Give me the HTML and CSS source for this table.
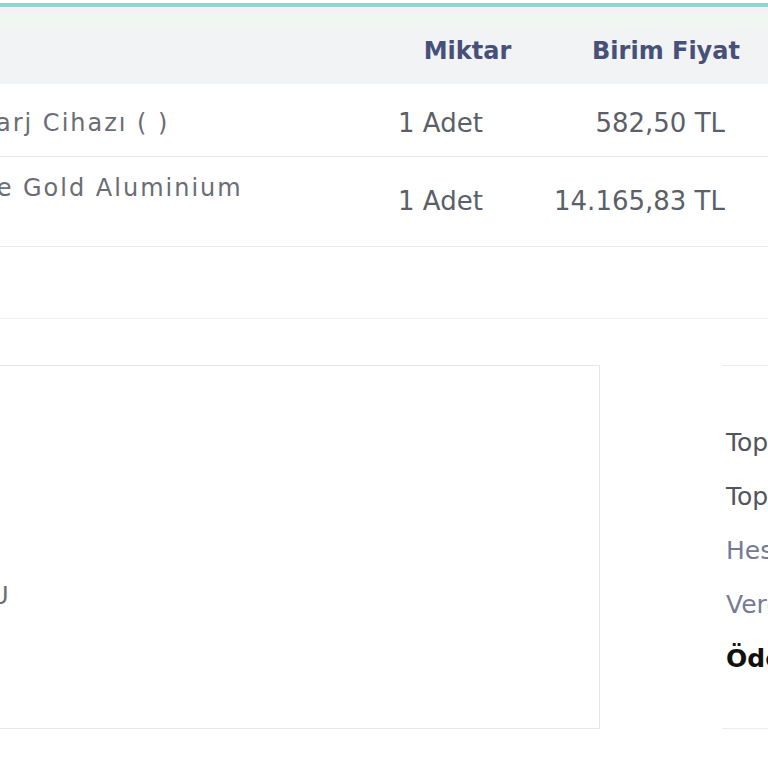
FILE: index.html
```html
<!DOCTYPE html>
<html lang="tr">
<head>
  <meta charset="UTF-8">
  <title>Fatura</title>
  <link rel="stylesheet" href="styles.css">
</head>
<body>

  <div class="sheet">
    <div class="stripe"></div>

    <table class="items">
      <colgroup>
        <col class="c-name">
        <col class="c-qty">
        <col class="c-price">
        <col class="c-total">
      </colgroup>
      <thead>
        <tr>
          <th class="name">Ürün</th>
          <th>Miktar</th>
          <th>Birim Fiyat</th>
          <th>Tutar</th>
        </tr>
      </thead>
      <tbody>
        <tr class="r1">
          <td class="name">Apple 20W USB-C Güç Adaptörü Şarj Cihazı ( )</td>
          <td class="qty">1 Adet</td>
          <td class="price">582,50 TL</td>
          <td class="price">582,50 TL</td>
        </tr>
        <tr class="r2">
          <td class="name">Apple Watch Series 9 - 40mm Rose Gold Aluminium<br>Kasa Spor Kordon</td>
          <td class="qty">1 Adet</td>
          <td class="price">14.165,83 TL</td>
          <td class="price">14.165,83 TL</td>
        </tr>
      </tbody>
      <tfoot>
        <tr><td colspan="4"></td></tr>
      </tfoot>
    </table>

    <div class="bottom">
      <div class="notes">
        <p>Not:</p>
        <p>E-Arşiv</p>
        <p>Kargo</p>
        <p>Teslimat</p>
        <p>Ödeme Onayı: BANKA ONAY KODU</p>
      </div>
      <div class="totals">
        <p class="dark">Toplam Tutar</p>
        <p class="dark">Toplam İndirim</p>
        <p class="soft">Hesaplanan KDV</p>
        <p class="soft">Vergiler Dahil Toplam</p>
        <p class="strong">Ödenecek Tutar</p>
      </div>
    </div>
  </div>

</body>
</html>
```

FILE: styles.css
```css
html, body { margin: 0; overflow: hidden; background: #fff; }
body { width: 768px; height: 768px; font-family: "DejaVu Sans", Verdana, sans-serif; color: #5c5f67; }

.sheet { margin-left: -500px; width: 1500px; }

.stripe { height: 24px; margin-top: 3px; border-top: 4px solid #93d3d2; box-sizing: border-box; background: linear-gradient(#f8eef7 0, #f8eef7 6px, #eef8f1 6px); }

.items { border-collapse: collapse; table-layout: fixed; width: 1500px; }
.c-name { width: 885px; }
.c-qty { width: 165px; }
.c-price { width: 232px; }
.c-total { width: 218px; }

.items th { background: #f2f3f5; color: #475079; font-size: 24px; font-weight: bold; text-align: center; height: 57px; padding: 0 0 10px; box-sizing: border-box; }
.items th.name { text-align: left; padding-left: 28px; }

.items td { font-size: 26px; border-bottom: 1px solid #e8e8ea; padding: 0; white-space: nowrap; box-sizing: border-box; }
.items td.name { font-size: 24px; letter-spacing: 2px; line-height: 32px; padding-left: 28px; color: #6a6d75; }
.items td.qty { padding-left: 13px; }
.items td.price { text-align: right; padding-right: 57px; }
.r1 td { height: 72px; padding-top: 7px; }
.r2 td { height: 90px; }
.r2 td.name { padding-top: 6px; }
.items tfoot td { height: 72px; border-bottom: 1px solid #efeff1; }

.bottom { display: flex; margin-top: 46px; }
.notes { width: 1100px; height: 364px; box-sizing: border-box; border: 1px solid #e6e6e8; padding: 50px 28px; font-size: 24px; letter-spacing: 2.45px; color: #6a6d75; }
.notes p { margin: 0; line-height: 40px; white-space: nowrap; }
.totals { margin-left: 122px; flex: 1; height: 364px; box-sizing: border-box; border-top: 1px solid #ececee; border-bottom: 1px solid #ececee; padding: 50px 4px; font-size: 25px; }
.totals p { margin: 0; line-height: 54px; white-space: nowrap; }
.totals .dark { color: #52555b; }
.totals .soft { color: #767b95; }
.totals .strong { color: #111; font-weight: bold; }
```
